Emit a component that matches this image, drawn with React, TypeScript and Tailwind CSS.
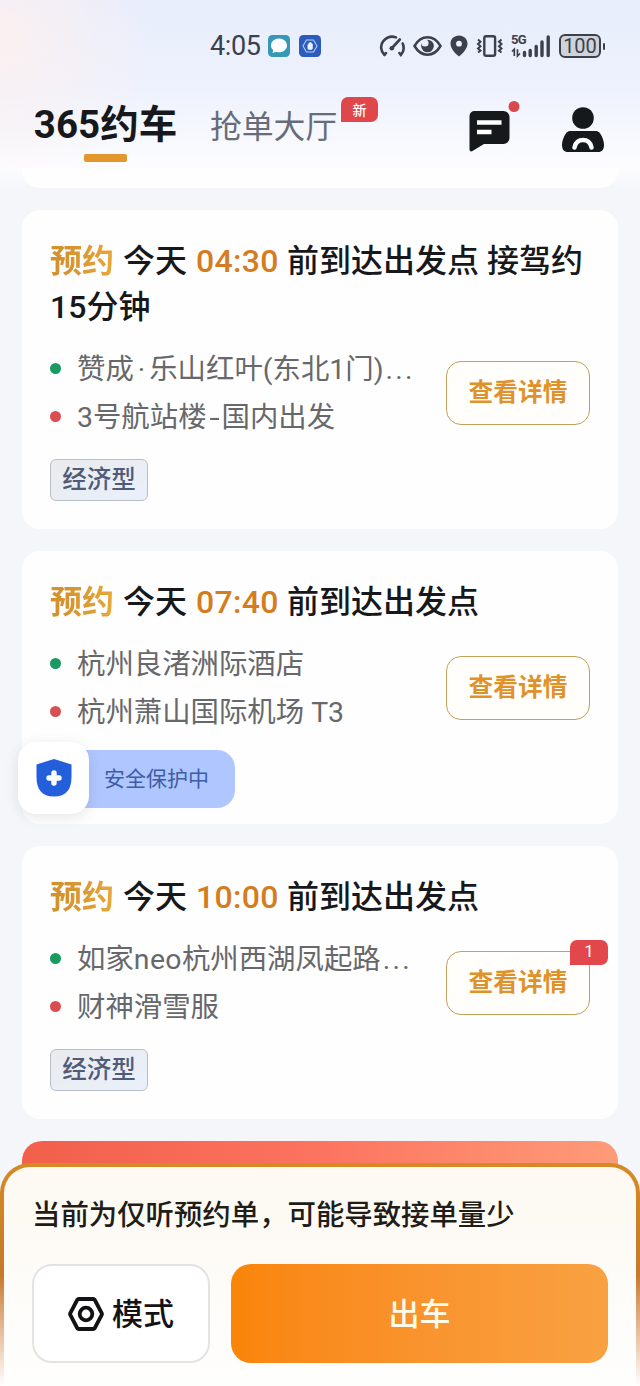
import React from 'react';

const orders = [
  {
    time: '04:30',
    title: '前到达出发点 接驾约',
    titleRest: '15分钟',
    from: (
      <>
        赞成<span className="mx-[4px]">·</span>乐山红叶(东北1门)
        <Dots />
      </>
    ),
    to: (
      <>
        3号航站楼<span className="inline-block w-[15px] scale-x-130 text-center">-</span>国内出发
      </>
    ),
    tag: '经济型',
  },
  {
    time: '07:40',
    title: '前到达出发点',
    from: '杭州良渚洲际酒店',
    to: '杭州萧山国际机场 T3',
    safety: true,
  },
  {
    time: '10:00',
    title: '前到达出发点',
    from: (
      <>
        如家<span className="tracking-[0.4px]">neo</span>杭州西湖凤起路
        <Dots />
      </>
    ),
    to: '财神滑雪服',
    tag: '经济型',
    badge: 1,
  },
];

function Dots() {
  return <span className="ml-[2px] tracking-[2.300px]">...</span>;
}

function StatusBar() {
  return (
    <div className="flex h-[92px] items-center pl-[210px] text-[#3c404b]">
      <span className="w-[51px] text-[27px] leading-none tracking-[-0.4px]">4:05</span>
      <svg className="ml-[7px]" width="22" height="22" viewBox="0 0 22 22">
        <rect width="22" height="22" rx="4.5" fill="#3598b5" />
        <path d="M11 3.6c4.500 0 8 3 8 6.800s-3.500 6.800-8 6.800c-1 0-2-.1-2.900-.5L4.500 18l.7-3C3.800 13.800 3 12.200 3 10.400c0-3.800 3.500-6.800 8-6.800z" fill="#fff" />
      </svg>
      <svg className="ml-[9px]" width="22" height="22" viewBox="0 0 22 22">
        <rect width="22" height="22" rx="4.500" fill="#2c5bbb" />
        <path d="M7.500 5h7l3.500 6-3.500 6h-7L4 11z" fill="none" stroke="#a9d2ff" strokeWidth="1.100" />
        <path d="M8.500 9.500h1V7.800h1.200V7h1v.8h1.200v1h.9v4.700l-1 1.300H9.300l-.8-1.300z" fill="#e8f4ff" />
      </svg>

      <svg className="ml-[58px]" width="27" height="24" viewBox="0 0 27 24" fill="none" stroke="currentColor" strokeWidth="2.600" strokeLinecap="round">
        <path d="M5.500 21l1.500-2M5.500 21C1.500 17 1 11 4.300 7.200S12.500 1.800 17 3.400" />
        <path d="M23.700 9.500c1.600 4 .9 8.500-1.800 11.500l-1.500-2" />
        <path d="M20.800 5.500L13 14" strokeWidth="2.600" />
        <circle cx="12.800" cy="14.300" r="2.300" fill="currentColor" stroke="none" />
      </svg>
      <svg className="ml-[7px]" width="29" height="22" viewBox="0 0 29 22">
        <path d="M1.500 11C5 5 9.500 2.300 14.500 2.300S24 5 27.500 11C24 17 19.500 19.700 14.500 19.700S5 17 1.500 11z" fill="none" stroke="currentColor" strokeWidth="2.500" />
        <circle cx="14.500" cy="11" r="6.300" fill="currentColor" />
        <circle cx="12" cy="8" r="3.600" fill="#ebeffc" />
      </svg>
      <svg className="ml-[8px]" width="18" height="22" viewBox="0 0 18 22">
        <path fillRule="evenodd" d="M9 .5c4.800 0 8.500 3.600 8.500 8.200C17.500 13.500 12.800 18.500 9 21.500 5.200 18.500.5 13.500.5 8.700.5 4.100 4.200.5 9 .5zM9 5.800a2.900 2.900 0 1 0 0 5.800 2.900 2.900 0 0 0 0-5.800z" fill="currentColor" />
      </svg>
      <svg className="ml-[8px]" width="28" height="22" viewBox="0 0 28 22" fill="none" stroke="currentColor">
        <rect x="8.300" y="1.300" width="10.800" height="19.400" rx="1.800" strokeWidth="2.400" />
        <path d="M2 4.500l2.500 2.200L2 9l2.500 2.200L2 13.500l2.500 2.200L2 17.500M25.500 4.500L23 6.700 25.500 9 23 11.200l2.500 2.300-2.500 2.200 2.500 1.800" strokeWidth="2" />
      </svg>
      <div className="relative ml-[7px] h-6 w-[40px]">
        <span className="absolute -top-px left-0 text-[13px] leading-[13px] font-bold tracking-[-0.8px]">5G</span>
        <svg className="absolute inset-0" width="40" height="24" viewBox="0 0 40 24" fill="none" stroke="currentColor">
          <path d="M1 17.500l2.300-2.200V22M6.500 15.300V22l2.500-2.500" strokeWidth="1.700" />
          <path d="M13.500 18.500V21.500M19.200 16.500V21.500M25.200 12.500V21.500M31 8V21.500M37.200 3V21.500" strokeWidth="3.400" strokeLinecap="round" />
        </svg>
      </div>
      <div className="ml-[8px] flex h-[24px] w-[42px] items-center justify-center rounded-[6px] border-2 border-current bg-[#cfd2d9] text-[20px] leading-none">100</div>
      <span className="ml-[1.500px] h-[7px] w-[2.500px] rounded-full bg-[#3c404b]" />
    </div>
  );
}

function Header() {
  return (
    <div className="flex h-[76px] items-start pl-[33px] text-[#17181c]">
      <div className="flex w-[145px] flex-col items-center">
        <h1 className="h-[62px] pt-[2px] text-[38.500px] leading-[62px] font-bold whitespace-nowrap">365约车</h1>
        <span className="h-[8px] w-[43px] rounded-[2px] bg-[#e2962c]" />
      </div>
      <div className="relative ml-[32px] w-[128px] pt-[3px] text-[31.800px] leading-[64px] whitespace-nowrap text-[#686c78]">
        抢单大厅
        <span className="absolute top-[5px] left-[131px] flex h-[25px] w-[37px] items-center justify-center rounded-[7px] rounded-bl-none bg-[#e0474a] text-[14px] leading-none font-medium text-white">新</span>
      </div>
      <svg className="mt-[8px] ml-[130px]" width="52" height="52" viewBox="0 0 52 52">
        <path d="M6.500 11h29a6 6 0 0 1 6 6v21a6 6 0 0 1-6 6H16L4.500 51C2.500 52 1.500 51 1.500 49V16a5 5 0 0 1 5-5z" fill="#15191c" />
        <path d="M9 22.500h24.500M9 32h14.500" stroke="#fff" strokeWidth="4.600" />
        <circle cx="46" cy="6.500" r="5.500" fill="#d9484b" />
      </svg>
      <svg className="mt-[14px] ml-[41px]" width="44" height="48" viewBox="0 0 44 48">
        <circle cx="22" cy="12" r="10.800" fill="#15191c" />
        <path d="M9 25h26c4 0 8 8 8 14 0 4.500-2 7-6 7H7c-4 0-6-2.500-6-7 0-6 4-14 8-14z" fill="#15191c" />
        <path d="M13.500 41.500c1.500-10 15.500-10 17 0" fill="none" stroke="#fff" strokeWidth="4.500" strokeLinecap="round" />
      </svg>
    </div>
  );
}

function SafetyPill() {
  return (
    <div className="absolute top-[191px] -left-[4px] flex items-center">
      <div className="z-10 flex h-[72px] w-[71px] items-center justify-center rounded-[18px] bg-white shadow-[0_3px_14px_rgba(0,0,0,0.1)]">
        <svg width="36" height="38" viewBox="0 0 36 38">
          <path d="M18 0l17.500 5.500V18c0 12-5 19.500-17.500 19.500S.5 30 .5 18V5.500z" fill="#235edb" />
          <path d="M18 14v10M13 19h10" stroke="#fff" strokeWidth="5.400" strokeLinecap="round" />
        </svg>
      </div>
      <div className="mt-[2px] -ml-[14px] flex h-[58px] w-[160px] items-center rounded-r-[18px] bg-[#b0c6fe] pl-[29px] text-[21px] text-[#3e5da8]">
        <span className="translate-y-px">安全保护中</span>
      </div>
    </div>
  );
}

function OrderCard({ order }) {
  return (
    <div className="relative rounded-[18px] bg-[#fefefe] px-[28px] pt-[28px] pb-[28px]">
      <h2 className="text-[32px] leading-[46px] font-medium text-[#17181b]">
        <div className="flex whitespace-nowrap">
          <span className="w-[73px] bg-linear-to-r from-[#d3922e] from-20% to-[#ecab3a] bg-clip-text font-bold text-transparent">预约</span>
          <span className="w-[73px]">今天</span>
          <span className="w-[91px] tracking-[0.3px] text-[#d57c20]">{order.time}</span>
          <span>{order.title}</span>
        </div>
        {order.titleRest && <div>{order.titleRest}</div>}
      </h2>
      <div className="mt-[14px] flex items-center justify-between">
        <div className="text-[28.400px] leading-[48px] whitespace-nowrap text-[#67686b]">
          <p className="flex items-center">
            <span className="mr-[16px] h-[11px] w-[11px] rounded-full bg-[#199a60]" />
            <span className="translate-y-[2px]">{order.from}</span>
          </p>
          <p className="flex items-center">
            <span className="mr-[16px] h-[11px] w-[11px] rounded-full bg-[#d84f52]" />
            <span className="translate-y-[2px]">{order.to}</span>
          </p>
        </div>
        <button className="relative mt-px h-[64px] w-[144px] rounded-[15px] border border-[#c3a05c] bg-[#fffefa] text-[24.700px] font-bold text-[#e0922a]">
          查看详情
          {order.badge && (
            <span className="absolute -top-[12px] -right-[19px] flex h-[25px] w-[38px] items-center justify-center rounded-[7px] rounded-bl-none bg-[#e2474b] text-[17px] font-normal text-white">
              {order.badge}
            </span>
          )}
        </button>
      </div>
      <div className="mt-[19px] h-[42px]">
        {order.tag && (
          <span className="flex h-[42px] w-[98px] items-center justify-center rounded-[6px] border border-[#b9bfca] bg-linear-to-br from-[#e9ebed] to-[#eaf0fb] text-[24.500px] font-medium text-[#4f5b79]">
            {order.tag}
          </span>
        )}
      </div>
      {order.safety && <SafetyPill />}
    </div>
  );
}

function BottomSheet() {
  return (
    <div className="-mt-[38px] h-[223px] rounded-t-[30px] bg-linear-to-b from-[#d68a25] via-[#c87828] via-50% to-[#fefefe] px-[4px] pt-[4px]">
      <div className="h-full rounded-t-[26px] bg-linear-to-b from-[#fdf9f2] to-[#fefefd] px-[28px] pt-[25px]">
        <p className="text-[28.400px] leading-[48px] font-medium text-[#211c18]">当前为仅听预约单，可能导致接单量少</p>
        <div className="mt-[24px] flex gap-[21px]">
          <button className="flex h-[99px] w-[178px] items-center justify-center gap-[8px] rounded-[20px] border-2 border-[#e4e3e1] bg-white text-[31px] font-medium text-[#131315]">
            <svg width="36" height="34" viewBox="0 0 36 34" fill="none" stroke="currentColor" strokeWidth="3.800">
              <path d="M10.800 2h14.400q1 0 1.500.8l7 13.200q.5 1 0 2l-7 13.200q-.5.8-1.500.8H10.800q-1 0-1.500-.8L2.300 18q-.5-1 0-2l7-13.200q.5-.8 1.500-.8z" />
              <circle cx="18" cy="17" r="6.300" />
            </svg>
            <span className="translate-y-[2px]">模式</span>
          </button>
          <button className="h-[99px] w-[377px] rounded-[20px] bg-linear-to-r from-[#f98508] to-[#f9a142] pt-[4px] text-[31px] font-medium text-[#fffbe9]">出车</button>
        </div>
      </div>
    </div>
  );
}

export default function App() {
  return (
    <div className="flex h-[1386px] w-[640px] flex-col overflow-hidden bg-[#f5f6fa] font-[Roboto,'Noto_Sans_CJK_SC',sans-serif]">
      <div className="h-[168px] bg-[radial-gradient(circle_at_0_40px,#fbf0f0_0,#fbf0f000_150px),linear-gradient(to_bottom,#e8edfc_0,#eef2fd_90px,#fcfcfe_165px)]">
        <StatusBar />
        <Header />
      </div>
      {/* bottom edge of the card scrolled under the header */}
      <div className="bg-linear-to-b from-[#fcfcfe] to-[#f5f6fa] px-[22px]">
        <div className="h-[20px] rounded-b-[18px] bg-[#fefefe]" />
      </div>
      <div className="mt-[22px] flex flex-col gap-[22px] px-[22px]">
        {orders.map((order) => (
          <OrderCard key={order.time} order={order} />
        ))}
        <div className="h-[60px] rounded-t-[20px] bg-linear-to-r from-[#f25f4b] via-[#fc735f] to-[#fd9b78]" />
      </div>
      <BottomSheet />
    </div>
  );
}
